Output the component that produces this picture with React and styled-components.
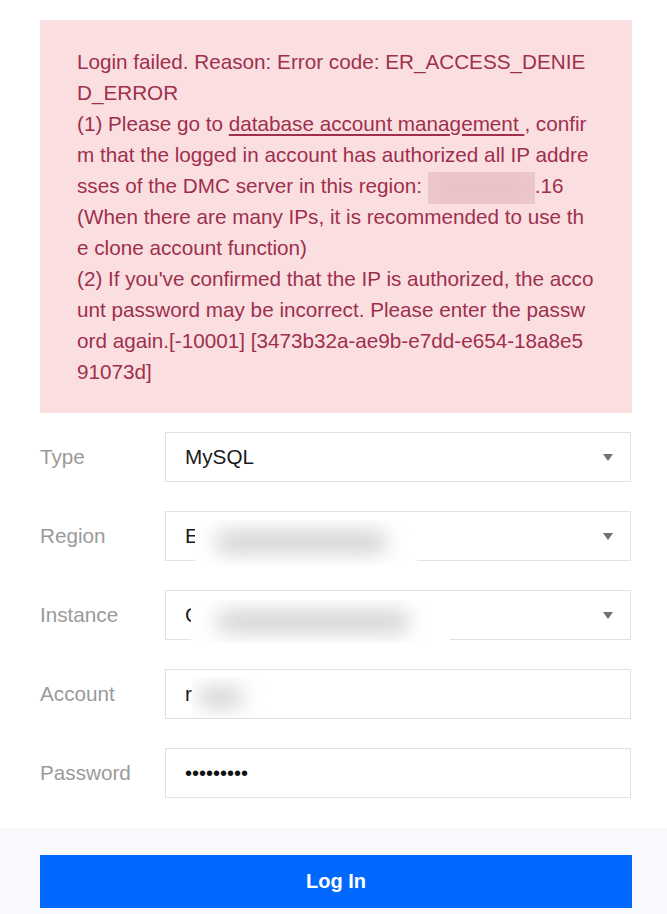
import React from 'react';
import styled, { createGlobalStyle } from 'styled-components';

const Global = createGlobalStyle`
  html, body {
    margin: 0;
    padding: 0;
    background: #fff;
    font-family: "Liberation Sans", Arial, sans-serif;
  }
`;

const Page = styled.div`
  width: 667px;
  min-height: 914px;
  display: flex;
  flex-direction: column;
`;

const Main = styled.div`
  padding: 20px 35px 0 40px;
`;

const ErrorBox = styled.div`
  background: #fbdfe0;
  color: #9e2f4e;
  font-size: 20.7px;
  line-height: 31px;
  padding: 26px 10px 26px 37px;
  white-space: nowrap;
  overflow: hidden;
`;

const Line = styled.div`
  height: 31px;
`;

const Link = styled.span`
  text-decoration: underline;
  text-underline-offset: 3px;
`;

const Redact = styled.span`
  display: inline-block;
  position: relative;
  vertical-align: middle;
  width: ${p => p.$w}px;
  height: ${p => p.$h}px;
  margin: ${p => p.$m || '0'};
  background: ${p => p.$bg || '#fff'};
  overflow: hidden;
  &::after {
    content: '';
    position: absolute;
    inset: ${p => p.$inset || '12px 20px'};
    background: ${p => p.$blob || '#d4d4d4'};
    filter: blur(10px);
    border-radius: 20px;
  }
`;

const Form = styled.div`
  display: flex;
  flex-direction: column;
  gap: 29px;
  padding: 19px 1px 30px 0;
`;

const Row = styled.div`
  display: grid;
  grid-template-columns: 125px 1fr;
  align-items: center;
`;

const Label = styled.div`
  color: #9a9a9a;
  font-size: 20.7px;
`;

const Field = styled.div`
  height: 50px;
  box-sizing: border-box;
  border: 1px solid #dde1e8;
  background: #fff;
  display: flex;
  align-items: center;
  padding: 0 17px 0 19px;
  font-size: 20.7px;
  color: #1a1a1a;
  white-space: nowrap;
`;

const Value = styled.span`
  flex: 1;
  display: flex;
  align-items: center;
`;

const Caret = styled.span`
  width: 0;
  height: 0;
  border-left: 5.5px solid transparent;
  border-right: 5.5px solid transparent;
  border-top: 7px solid #707070;
`;

const Dots = styled.span`
  font-size: 20px;
  color: #111;
  line-height: 1;
`;

const Footer = styled.div`
  flex: 1;
  background: #f8f9fd;
  padding: 27px 35px 6px 40px;
`;

const Button = styled.button`
  width: 100%;
  height: 53px;
  border: none;
  background: #0068ff;
  color: #fff;
  font-family: "Liberation Sans", Arial, sans-serif;
  font-size: 20px;
  font-weight: bold;
  cursor: pointer;
`;

const fields = [
  { label: 'Type', value: 'MySQL', select: true },
  { label: 'Region', value: 'E', select: true, redact: { w: 222, h: 46, m: '6px 0 -8px -4px', inset: '10px 30px 12px 20px' } },
  { label: 'Instance', value: 'C', select: true, redact: { w: 259, h: 43, m: '6px 0 -6px -9px', inset: '10px 40px 10px 25px' } },
  { label: 'Account', value: 'r', redact: { w: 77, h: 41, m: '6px 0 0 0', inset: '10px 25px 10px 5px' } },
  { label: 'Password', password: true },
];

export default function App() {
  return (
    <Page>
      <Global />
      <Main>
        <ErrorBox>
          <Line>Login failed. Reason: Error code: ER_ACCESS_DENIE</Line>
          <Line>D_ERROR</Line>
          <Line>(1) Please go to <Link>database account management </Link>, confir</Line>
          <Line>m that the logged in account has authorized all IP addre</Line>
          <Line>
            sses of the DMC server in this region:{' '}
            <Redact $w={107} $h={32} $bg="#edc8cc" $blob="#e8c0c5" $inset="4px 8px" />
            .16
          </Line>
          <Line>(When there are many IPs, it is recommended to use th</Line>
          <Line>e clone account function)</Line>
          <Line>(2) If you've confirmed that the IP is authorized, the acco</Line>
          <Line>unt password may be incorrect. Please enter the passw</Line>
          <Line>ord again.[-10001] [3473b32a-ae9b-e7dd-e654-18a8e5</Line>
          <Line>91073d]</Line>
        </ErrorBox>
        <Form>
          {fields.map(f => (
            <Row key={f.label}>
              <Label>{f.label}</Label>
              <Field>
                <Value>
                  {f.password ? <Dots>•••••••••</Dots> : f.value}
                  {f.redact && (
                    <Redact $w={f.redact.w} $h={f.redact.h} $m={f.redact.m} $inset={f.redact.inset} />
                  )}
                </Value>
                {f.select && <Caret />}
              </Field>
            </Row>
          ))}
        </Form>
      </Main>
      <Footer>
        <Button>Log In</Button>
      </Footer>
    </Page>
  );
}
